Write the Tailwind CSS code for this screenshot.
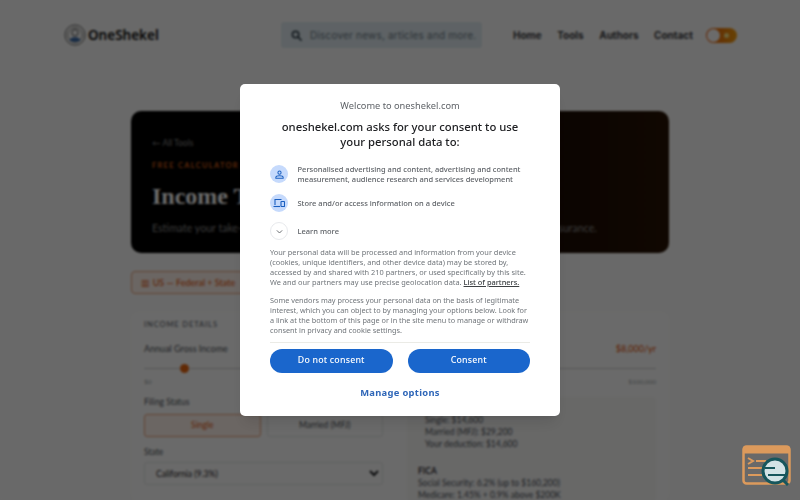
<!DOCTYPE html>
<html lang="en">
<head>
  <meta charset="UTF-8" />
  <title>Income Tax Calculator - OneShekel</title>
  <script src="https://cdn.jsdelivr.net/npm/@tailwindcss/browser@4"></script>
</head>
<body class="relative h-[500px] w-[800px] overflow-hidden bg-[#fbfbfa] font-['Lato',sans-serif] text-[#1f2024]">
  <header class="flex h-[70px] items-center pl-[64px] pr-[64px]">
    <div class="flex w-[217px] shrink-0 items-center gap-[2px]">
      <svg class="h-[22px] w-[22px]" viewBox="0 0 24 24" fill="none">
        <circle cx="12" cy="12" r="11" stroke="#555" stroke-width="1"/>
        <circle cx="12" cy="12" r="8" stroke="#555" stroke-width="0.8"/>
        <circle cx="12" cy="9.500" r="3.500" stroke="#444" stroke-width="1"/>
        <path d="M6 18c1-3 4-3.500 6-3.500s5 .5 6 3.500c-3 2-9 2-12 0z" fill="#3b6aa8"/>
      </svg>
      <span class="font-['Noto_Sans',sans-serif] text-[13.500px] font-semibold text-[#0b0b0b]">OneShekel</span>
    </div>
    <div class="flex h-[26px] w-[201px] shrink-0 items-center gap-[8px] rounded-[3px] bg-[#dfeaf0] pl-[10px]">
      <svg class="h-[11px] w-[11px]" viewBox="0 0 24 24" fill="none" stroke="#33414c" stroke-width="3.500" stroke-linecap="round"><circle cx="10" cy="10" r="7"/><path d="M15.500 15.500 22 22"/></svg>
      <span class="whitespace-nowrap font-['Inter',sans-serif] text-[10px] tracking-[0.2px] text-[#6c7a86]">Discover news, articles and more.</span>
    </div>
    <nav class="ml-[31px] flex items-center gap-[15.500px] font-['Inter',sans-serif] text-[10px] font-bold text-[#3b3c42]">
      <a>Home</a>
      <a>Tools</a>
      <a>Authors</a>
      <a>Contact</a>
    </nav>
    <div class="ml-[13px] flex h-[15px] w-[31px] shrink-0 items-center rounded-full bg-gradient-to-r from-[#e8590c] to-[#f59e0b] pl-[1px]">
      <div class="h-[13px] w-[13px] rounded-full bg-white"></div>
      <div class="ml-[4px] h-[5px] w-[5px] rounded-full bg-[#fde68a]"></div>
    </div>
  </header>

  <main class="mx-auto mt-[41px] w-[538px]">
    <section class="h-[142px] rounded-[10px] bg-gradient-to-r from-black via-[#0c0502] to-[#271203] pl-[21px] pr-[20px] pt-[27px]">
      <p class="text-[8.500px] leading-[10px] text-[#8a8a8a]">← All Tools</p>
      <p class="mt-[13px] text-[7.500px] font-semibold leading-[10px] tracking-[1.300px] text-[#ea6a1c]">FREE CALCULATOR</p>
      <h1 class="mt-[11px] font-['Liberation_Serif',serif] text-[24px] font-bold leading-[28px] text-white">Income Tax Calculator</h1>
      <p class="mt-[12px] text-[10.600px] leading-[12px] text-[#8a8a8a]">Estimate your take-home pay after federal tax, state tax, Social Security and Medicare insurance.</p>
    </section>

    <div class="mt-[18px] flex h-[23px] w-[114px] items-center justify-center gap-[3px] rounded-[4px] border border-[#e8a27a] bg-[#fff3ec] text-[9px] font-medium text-[#e2570f]">▥ <span>US — Federal + State</span></div>

    <section class="mt-[18px] rounded-[8px] bg-[#fdfdfc] px-[13px] pt-[8px]">
      <h2 class="text-[7.500px] font-semibold leading-[10px] tracking-[0.9px] text-[#6b7078]">INCOME DETAILS</h2>
      <div class="mt-[13px] flex justify-between text-[9px] leading-[11px]">
        <span class="text-[#4b5058]">Annual Gross Income</span>
        <span class="font-medium text-[#e2570f]">$8,000/yr</span>
      </div>
      <div class="relative mt-[14px] h-[1px] bg-[#c9cbd0]">
        <div class="absolute left-[36px] top-[-4px] h-[9px] w-[9px] rounded-full bg-[#e8650f]"></div>
      </div>
      <div class="mt-[8px] flex justify-between text-[6.500px] leading-[9px] text-[#9aa0a6]"><span>$0</span><span>$100,000</span></div>

      <div class="mt-[11px] grid grid-cols-[239px_1fr] gap-[24px]">
        <div>
          <p class="text-[8.500px] leading-[11px] text-[#4b5058]">Filing Status</p>
          <div class="mt-[6px] grid grid-cols-2 gap-[6px] text-[8.500px]">
            <div class="flex h-[23px] items-center justify-center rounded-[3px] border border-[#e8a27a] bg-[#fff3ec] text-[#e2570f]">Single</div>
            <div class="flex h-[23px] items-center justify-center rounded-[3px] border border-[#e3e4e6] text-[#4b5058]">Married (MFJ)</div>
          </div>
          <p class="mt-[10px] text-[8.500px] leading-[11px] text-[#4b5058]">State</p>
          <select class="mt-[4px] h-[23px] w-full rounded-[3px] border border-[#e3e4e6] pl-[7px] text-[8.600px] text-[#1f2024]">
            <option>California (9.3%)</option>
          </select>
        </div>
        <div class="rounded-[4px] bg-[#f7f7f6] pl-[11px] pt-[17px] text-[8.500px] leading-[12px] text-[#4b5058]">
          <div class="pl-[7px]">
            <p>Single: $14,600</p>
            <p>Married (MFJ): $29,200</p>
            <p>Your deduction: $14,600</p>
          </div>
          <p class="mt-[15px] font-semibold text-[#1f2024]">FICA</p>
          <p>Social Security: 6.2% (up to $160,200)</p>
          <p>Medicare: 1.45% + 0.9% above $200K</p>
        </div>
      </div>
    </section>
  </main>

  <div class="fixed inset-0 flex items-center justify-center bg-black/58 backdrop-blur-[1px]">
    <div class="h-[332px] w-[320px] rounded-[5px] bg-white px-[30px] pt-[15px] font-['Noto_Sans',sans-serif] text-[#5f6368] shadow-lg">
      <p class="text-center text-[9.250px] leading-[14px]">Welcome to oneshekel.com</p>
      <h2 class="mt-[6px] text-center text-[11.300px] font-medium leading-[15px] text-[#202124]">oneshekel.com asks for your consent to use your personal data to:</h2>
      <div class="mt-[15px] flex items-center gap-[9.500px]">
        <span class="flex h-[18px] w-[18px] shrink-0 items-center justify-center rounded-full bg-[#c6dafc]">
          <svg class="h-[11px] w-[11px]" viewBox="0 0 24 24" fill="none" stroke="#1a5fc0" stroke-width="2.200"><circle cx="12" cy="8" r="3.500"/><path d="M4 20v-2c0-2 3-3.500 8-3.500s8 1.500 8 3.500v2z"/></svg>
        </span>
        <p class="text-[7.500px] font-medium leading-[10px]">Personalised advertising and content, advertising and content measurement, audience research and services development</p>
      </div>
      <div class="mt-[10px] flex items-center gap-[9.500px]">
        <span class="flex h-[18px] w-[18px] shrink-0 items-center justify-center rounded-full bg-[#c6dafc]">
          <svg class="h-[12px] w-[12px]" viewBox="0 0 24 24" fill="none" stroke="#1a5fc0" stroke-width="2.200"><path d="M4 16V5h13"/><path d="M1 19h13"/><rect x="16" y="9" width="7" height="10" rx="1"/></svg>
        </span>
        <p class="text-[7.500px] font-medium leading-[10px]">Store and/or access information on a device</p>
      </div>
      <div class="mt-[10px] flex items-center gap-[9.500px]">
        <span class="flex h-[18px] w-[18px] shrink-0 items-center justify-center rounded-full border border-[#e8eaed]">
          <svg class="h-[9px] w-[9px]" viewBox="0 0 24 24" fill="none" stroke="#5f6368" stroke-width="2.500"><path d="m5 9 7 7 7-7"/></svg>
        </span>
        <p class="text-[7.500px] font-medium leading-[10px]">Learn more</p>
      </div>
      <p class="mt-[7px] text-[7.400px] leading-[10px] text-[#70757a]">Your personal data will be processed and information from your device (cookies, unique identifiers, and other device data) may be stored by, accessed by and shared with 210 partners, or used specifically by this site. We and our partners may use precise geolocation data. <a class="font-medium text-[#3c4043] underline">List of partners.</a></p>
      <p class="mt-[8px] text-[7.300px] leading-[10px] text-[#70757a]">Some vendors may process your personal data on the basis of legitimate interest, which you can object to by managing your options below. Look for a link at the bottom of this page or in the site menu to manage or withdraw consent in privacy and cookie settings.</p>
      <div class="mt-[7px] border-t border-[#ebebe6]"></div>
      <div class="mt-[6px] grid grid-cols-2 gap-[15px]">
        <button class="h-[24px] rounded-full bg-[#1a66cc] text-[8.800px] font-medium tracking-[0.2px] text-white">Do not consent</button>
        <button class="h-[24px] rounded-full bg-[#1a66cc] text-[8.800px] font-medium tracking-[0.2px] text-white">Consent</button>
      </div>
      <p class="mt-[13px] text-center text-[9.400px] font-bold leading-[14px] tracking-[0.3px] text-[#2e66b8]">Manage options</p>
    </div>
  </div>

  <svg class="fixed bottom-[13px] right-[8px] h-[42px] w-[50px]" viewBox="0 0 50 42" fill="none">
    <rect x="1.500" y="1.500" width="46" height="37" rx="3" stroke="#dc9a5c" stroke-width="2.500"/>
    <rect x="1.500" y="1.500" width="46" height="7" fill="#dc9a5c"/>
    <path d="M6 13l5 3-5 3M14 16h10M6 23h18M6 30h14" stroke="#dc9a5c" stroke-width="2"/>
    <circle cx="33" cy="26" r="12" fill="#d3e3e6" stroke="#17565c" stroke-width="3"/>
    <path d="M23 23h10M26 30h17" stroke="#17565c" stroke-width="2"/>
    <path d="M41 35l5 5" stroke="#17565c" stroke-width="3"/>
  </svg>
</body>
</html>
